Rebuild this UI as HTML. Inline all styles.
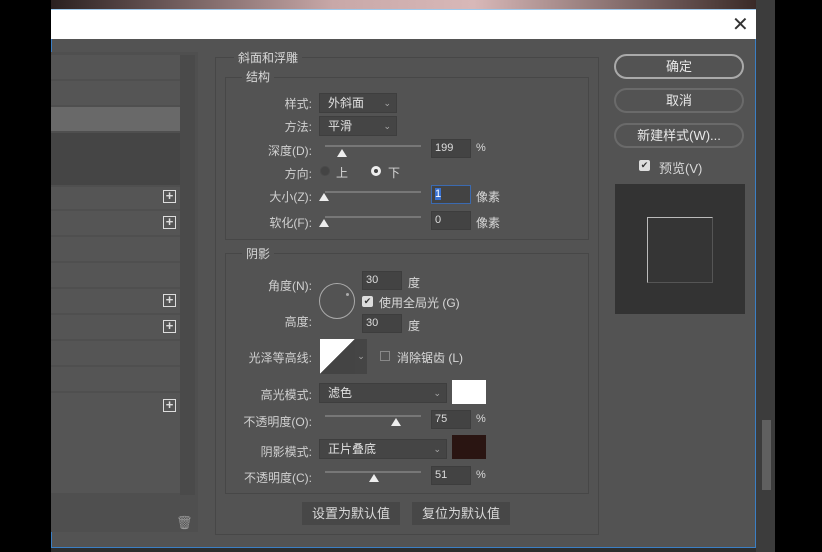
<!DOCTYPE html>
<html><head><meta charset="utf-8"><style>
*{margin:0;padding:0;box-sizing:border-box}
body{width:822px;height:552px;background:#000;position:relative;overflow:hidden;font-family:"Liberation Sans","Noto Sans CJK SC",sans-serif;font-size:12px;color:#d8d8d8}
.a{position:absolute}
.r{position:absolute;left:51px;width:129px;background:#555}
.plus{position:absolute;left:163px;width:13px;height:13px;border:1px solid #ddd;color:#ddd;font-size:13px;line-height:10px;text-align:center;font-weight:bold}
.lbl{position:absolute;text-align:right;width:90px;font-size:12px;color:#d0d0d0}
.sel{position:absolute;background:#454545;border:1px solid #3e3e3e;height:20px;padding-left:8px;line-height:18px;font-size:12px;color:#e0e0e0}
.inp{position:absolute;background:#434343;border:1px solid #3d3d3d;height:19px;padding-left:3px;line-height:17px;font-size:11px;color:#ddd;width:40px}
.trk{position:absolute;height:2px;background:#777}
.th{position:absolute;width:0;height:0;border-left:5px solid transparent;border-right:5px solid transparent;border-bottom:8px solid #eee}
.btn{position:absolute;border:2px solid #777;border-radius:13px;height:25px;width:130px;text-align:center;line-height:21px;font-size:13px;color:#e8e8e8}
.box{position:absolute;border:1px solid #474747}
.chev{font-size:9px;color:#aaa;position:absolute;right:5px;top:0}
</style></head><body>
<div class="a" style="left:51px;top:0;width:705px;height:9px;background:linear-gradient(90deg,#2a2020,#c8a8a8 40%,#d8b8b8 60%,#3a2a28)"></div>
<div class="a" style="left:756px;top:0;width:19px;height:552px;background:#3c3c3c"></div>
<div class="a" style="left:762px;top:420px;width:9px;height:70px;background:#606060"></div>
<div class="a" style="left:51px;top:9px;width:705px;height:539px;background:#535353;border:1px solid #3b7fc4;border-top:none"></div>
<div class="a" style="left:51px;top:9px;width:705px;height:30px;background:#fff;border-top:1px solid #9cc8ec"></div>
<div class="a" style="left:732px;top:12px;font-size:20px;color:#333">✕</div>
<div class="a" style="left:51px;top:548px;width:705px;height:4px;background:#2d2d2d"></div>
<!-- left panel -->
<div class="a" style="left:51px;top:52px;width:147px;height:480px;background:#4f4f4f"></div>
<div class="a" style="left:180px;top:55px;width:15px;height:440px;background:#4a4a4a"></div>
<div class="r" style="top:55px;height:24px"></div>
<div class="r" style="top:81px;height:24px"></div>
<div class="r" style="top:107px;height:24px;background:#696969"></div>
<div class="r" style="top:133px;height:52px;background:#454545"></div>
<div class="r" style="top:187px;height:22px"></div>
<div class="r" style="top:211px;height:24px"></div>
<div class="r" style="top:237px;height:24px"></div>
<div class="r" style="top:263px;height:24px"></div>
<div class="r" style="top:289px;height:24px"></div>
<div class="r" style="top:315px;height:24px"></div>
<div class="r" style="top:341px;height:24px"></div>
<div class="r" style="top:367px;height:24px"></div>
<div class="r" style="top:393px;height:100px"></div>
<div class="plus" style="top:190px">+</div>
<div class="plus" style="top:216px">+</div>
<div class="plus" style="top:294px">+</div>
<div class="plus" style="top:320px">+</div>
<div class="plus" style="top:399px">+</div>
<div class="a" style="left:176px;top:515px;color:#999;font-size:13px">🗑</div>
<!-- main fieldset -->
<div class="box" style="left:215px;top:57px;width:384px;height:478px"></div>
<div class="a" style="left:234px;top:49px;background:#535353;padding:0 4px;font-size:12px">斜面和浮雕</div>
<div class="box" style="left:225px;top:77px;width:364px;height:163px"></div>
<div class="a" style="left:242px;top:68px;background:#535353;padding:0 4px">结构</div>
<div class="lbl" style="left:222px;top:95px">样式:</div>
<div class="sel" style="left:319px;top:93px;width:78px">外斜面<span class="chev">⌄</span></div>
<div class="lbl" style="left:222px;top:118px">方法:</div>
<div class="sel" style="left:319px;top:116px;width:78px">平滑<span class="chev">⌄</span></div>
<div class="lbl" style="left:222px;top:142px">深度(D):</div>
<div class="trk" style="left:325px;top:145px;width:96px"></div>
<div class="th" style="left:337px;top:149px"></div>
<div class="inp" style="left:431px;top:139px">199</div>
<div class="a" style="left:476px;top:142px;font-size:11px">%</div>
<div class="lbl" style="left:222px;top:165px">方向:</div>
<div class="a" style="left:320px;top:166px;width:10px;height:10px;border-radius:50%;background:#444;border:1px solid #4a4a4a"></div>
<div class="a" style="left:336px;top:164px">上</div>
<div class="a" style="left:371px;top:166px;width:10px;height:10px;border-radius:50%;border:3px solid #eee;background:#444"></div>
<div class="a" style="left:388px;top:164px">下</div>
<div class="lbl" style="left:222px;top:188px">大小(Z):</div>
<div class="trk" style="left:325px;top:191px;width:96px"></div>
<div class="th" style="left:319px;top:193px"></div>
<div class="inp" style="left:431px;top:185px;border:1px solid #3b6ab0"><span style="background:#3a72d0;color:#fff">1</span></div>
<div class="a" style="left:476px;top:188px">像素</div>
<div class="lbl" style="left:222px;top:214px">软化(F):</div>
<div class="trk" style="left:325px;top:216px;width:96px"></div>
<div class="th" style="left:319px;top:219px"></div>
<div class="inp" style="left:431px;top:211px">0</div>
<div class="a" style="left:476px;top:214px">像素</div>
<div class="box" style="left:225px;top:253px;width:364px;height:241px"></div>
<div class="a" style="left:242px;top:245px;background:#535353;padding:0 4px">阴影</div>
<div class="lbl" style="left:222px;top:277px">角度(N):</div>
<div class="a" style="left:319px;top:283px;width:36px;height:36px;border-radius:50%;border:1px solid #aaa"></div>
<div class="a" style="left:346px;top:293px;width:3px;height:3px;background:#aaa;border-radius:50%"></div>
<div class="inp" style="left:362px;top:271px">30</div>
<div class="a" style="left:408px;top:274px">度</div>
<div class="a" style="left:362px;top:296px;width:11px;height:11px;background:#ddd;border-radius:2px;color:#333;font-size:9px;line-height:11px;text-align:center">✔</div>
<div class="a" style="left:379px;top:294px">使用全局光 (G)</div>
<div class="lbl" style="left:222px;top:313px">高度:</div>
<div class="inp" style="left:362px;top:314px">30</div>
<div class="a" style="left:408px;top:317px">度</div>
<div class="lbl" style="left:222px;top:349px">光泽等高线:</div>
<div class="a" style="left:320px;top:339px;width:35px;height:35px;background:linear-gradient(to bottom right,#fff 50%,#444 50%)"></div>
<div class="a" style="left:355px;top:339px;width:12px;height:35px;background:#454545;color:#aaa;font-size:9px;text-align:center;line-height:35px">⌄</div>
<div class="a" style="left:380px;top:351px;width:10px;height:10px;border:1px solid #888"></div>
<div class="a" style="left:397px;top:349px">消除锯齿 (L)</div>
<div class="lbl" style="left:222px;top:386px">高光模式:</div>
<div class="sel" style="left:319px;top:383px;width:128px">滤色<span class="chev">⌄</span></div>
<div class="a" style="left:452px;top:380px;width:34px;height:24px;background:#fff"></div>
<div class="lbl" style="left:222px;top:413px">不透明度(O):</div>
<div class="trk" style="left:325px;top:415px;width:96px"></div>
<div class="th" style="left:391px;top:418px"></div>
<div class="inp" style="left:431px;top:410px">75</div>
<div class="a" style="left:476px;top:413px;font-size:11px">%</div>
<div class="lbl" style="left:222px;top:443px">阴影模式:</div>
<div class="sel" style="left:319px;top:439px;width:128px">正片叠底<span class="chev">⌄</span></div>
<div class="a" style="left:452px;top:435px;width:34px;height:24px;background:#2a1512"></div>
<div class="lbl" style="left:222px;top:469px">不透明度(C):</div>
<div class="trk" style="left:325px;top:471px;width:96px"></div>
<div class="th" style="left:369px;top:474px"></div>
<div class="inp" style="left:431px;top:466px">51</div>
<div class="a" style="left:476px;top:469px;font-size:11px">%</div>
<div class="a" style="left:302px;top:502px;width:98px;height:23px;background:#474747;text-align:center;line-height:23px;font-size:13px">设置为默认值</div>
<div class="a" style="left:412px;top:502px;width:98px;height:23px;background:#474747;text-align:center;line-height:23px;font-size:13px">复位为默认值</div>
<!-- right -->
<div class="btn" style="left:614px;top:54px;border-color:#aaa">确定</div>
<div class="btn" style="left:614px;top:88px;border-color:#6a6a6a">取消</div>
<div class="btn" style="left:614px;top:123px;border-color:#6a6a6a">新建样式(W)...</div>
<div class="a" style="left:639px;top:160px;width:11px;height:11px;background:#ddd;border-radius:2px;color:#333;font-size:9px;line-height:11px;text-align:center">✔</div>
<div class="a" style="left:659px;top:158px;font-size:13px">预览(V)</div>
<div class="a" style="left:615px;top:184px;width:130px;height:130px;background:#333"></div>
<div class="a" style="left:647px;top:217px;width:66px;height:66px;border:1px solid #bbb;border-right-color:#555;border-bottom-color:#555;background:#353535"></div>
</body></html>
